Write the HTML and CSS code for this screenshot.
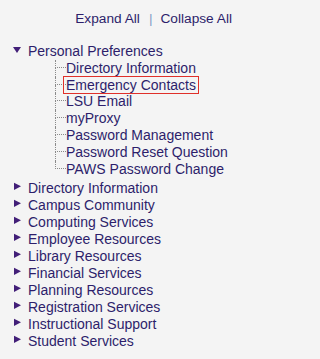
FILE: index.html
```html
<!DOCTYPE html>
<html>
<head>
<meta charset="utf-8">
<link rel="stylesheet" href="styles.css">
</head>
<body>
<div class="page">
<div class="toolbar">
  <a class="tool-link" href="#">Expand All</a>
  <span class="sep">|</span>
  <a class="tool-link" href="#">Collapse All</a>
</div>
<ul class="tree">
  <li class="node">
    <div class="node-row">
      <svg class="arrow" width="8" height="12" viewBox="0 0 8 12"><polygon points="0,2 8,2 4,8"/></svg>
      <a class="node-link" href="#">Personal Preferences</a>
    </div>
    <ul class="children">
      <li class="leaf"><span class="elbow"><span class="elbow-top"></span><span class="elbow-rest"></span></span><a class="leaf-link" href="#">Directory Information</a></li>
      <li class="leaf"><span class="elbow"><span class="elbow-top"></span><span class="elbow-rest"></span></span><a class="leaf-link selected" href="#">Emergency Contacts</a></li>
      <li class="leaf"><span class="elbow"><span class="elbow-top"></span><span class="elbow-rest"></span></span><a class="leaf-link" href="#">LSU Email</a></li>
      <li class="leaf"><span class="elbow"><span class="elbow-top"></span><span class="elbow-rest"></span></span><a class="leaf-link" href="#">myProxy</a></li>
      <li class="leaf"><span class="elbow"><span class="elbow-top"></span><span class="elbow-rest"></span></span><a class="leaf-link" href="#">Password Management</a></li>
      <li class="leaf"><span class="elbow"><span class="elbow-top"></span><span class="elbow-rest"></span></span><a class="leaf-link" href="#">Password Reset Question</a></li>
      <li class="leaf last"><span class="elbow"><span class="elbow-top"></span><span class="elbow-rest"></span></span><a class="leaf-link" href="#">PAWS Password Change</a></li>
    </ul>
  </li>
  <li class="node"><div class="node-row"><svg class="arrow" width="8" height="12" viewBox="0 0 8 12"><polygon points="1,0.7 8,4.3 1,8"/></svg><a class="node-link" href="#">Directory Information</a></div></li>
  <li class="node"><div class="node-row"><svg class="arrow" width="8" height="12" viewBox="0 0 8 12"><polygon points="1,0.7 8,4.3 1,8"/></svg><a class="node-link" href="#">Campus Community</a></div></li>
  <li class="node"><div class="node-row"><svg class="arrow" width="8" height="12" viewBox="0 0 8 12"><polygon points="1,0.7 8,4.3 1,8"/></svg><a class="node-link" href="#">Computing Services</a></div></li>
  <li class="node"><div class="node-row"><svg class="arrow" width="8" height="12" viewBox="0 0 8 12"><polygon points="1,0.7 8,4.3 1,8"/></svg><a class="node-link" href="#">Employee Resources</a></div></li>
  <li class="node"><div class="node-row"><svg class="arrow" width="8" height="12" viewBox="0 0 8 12"><polygon points="1,0.7 8,4.3 1,8"/></svg><a class="node-link" href="#">Library Resources</a></div></li>
  <li class="node"><div class="node-row"><svg class="arrow" width="8" height="12" viewBox="0 0 8 12"><polygon points="1,0.7 8,4.3 1,8"/></svg><a class="node-link" href="#">Financial Services</a></div></li>
  <li class="node"><div class="node-row"><svg class="arrow" width="8" height="12" viewBox="0 0 8 12"><polygon points="1,0.7 8,4.3 1,8"/></svg><a class="node-link" href="#">Planning Resources</a></div></li>
  <li class="node"><div class="node-row"><svg class="arrow" width="8" height="12" viewBox="0 0 8 12"><polygon points="1,0.7 8,4.3 1,8"/></svg><a class="node-link" href="#">Registration Services</a></div></li>
  <li class="node"><div class="node-row"><svg class="arrow" width="8" height="12" viewBox="0 0 8 12"><polygon points="1,0.7 8,4.3 1,8"/></svg><a class="node-link" href="#">Instructional Support</a></div></li>
  <li class="node"><div class="node-row"><svg class="arrow" width="8" height="12" viewBox="0 0 8 12"><polygon points="1,0.7 8,4.3 1,8"/></svg><a class="node-link" href="#">Student Services</a></div></li>
</ul>
</div>
</body>
</html>
```
FILE: styles.css
```css
html, body {
  margin: 0;
  padding: 0;
  background: #f4f4f4;
}
body {
  font-family: "Liberation Sans", Arial, sans-serif;
  font-size: 14px;
  color: #2d1e6b;
}
a {
  color: inherit;
  text-decoration: none;
}
.page {
  width: 247px;
}
.toolbar {
  display: flex;
  justify-content: flex-end;
  padding: 11px 15px 0 0;
  line-height: 16.8px;
  font-size: 13.7px;
}
.sep {
  color: #7d9cc6;
  margin: 0 8px 0 9px;
}
.tree {
  list-style: none;
  margin: 15px 0 0 0;
  padding: 0;
}
.node-row {
  display: flex;
  align-items: center;
  height: 17px;
  line-height: 17px;
}
.arrow {
  flex: none;
  margin: 0 7px 0 13px;
  fill: #421f78;
}
.children {
  list-style: none;
  margin: 0 0 2.5px 55px;
  padding: 0;
}
.leaf {
  display: flex;
  height: 16.8px;
  line-height: 16.8px;
}
.elbow {
  flex: none;
  width: 11px;
  display: flex;
  flex-direction: column;
}
.elbow-top {
  height: 8px;
  box-sizing: border-box;
  border-left: 1px dotted #8a8a8a;
  border-bottom: 1px dotted #8a8a8a;
}
.elbow-rest {
  flex: 1;
  border-left: 1px dotted #8a8a8a;
}
.leaf.last .elbow-rest {
  border-left: none;
}
.selected {
  padding: 0 2px 1px 2px;
  margin: 0 -2px;
  outline: 1px solid #e0302a;
}
```
